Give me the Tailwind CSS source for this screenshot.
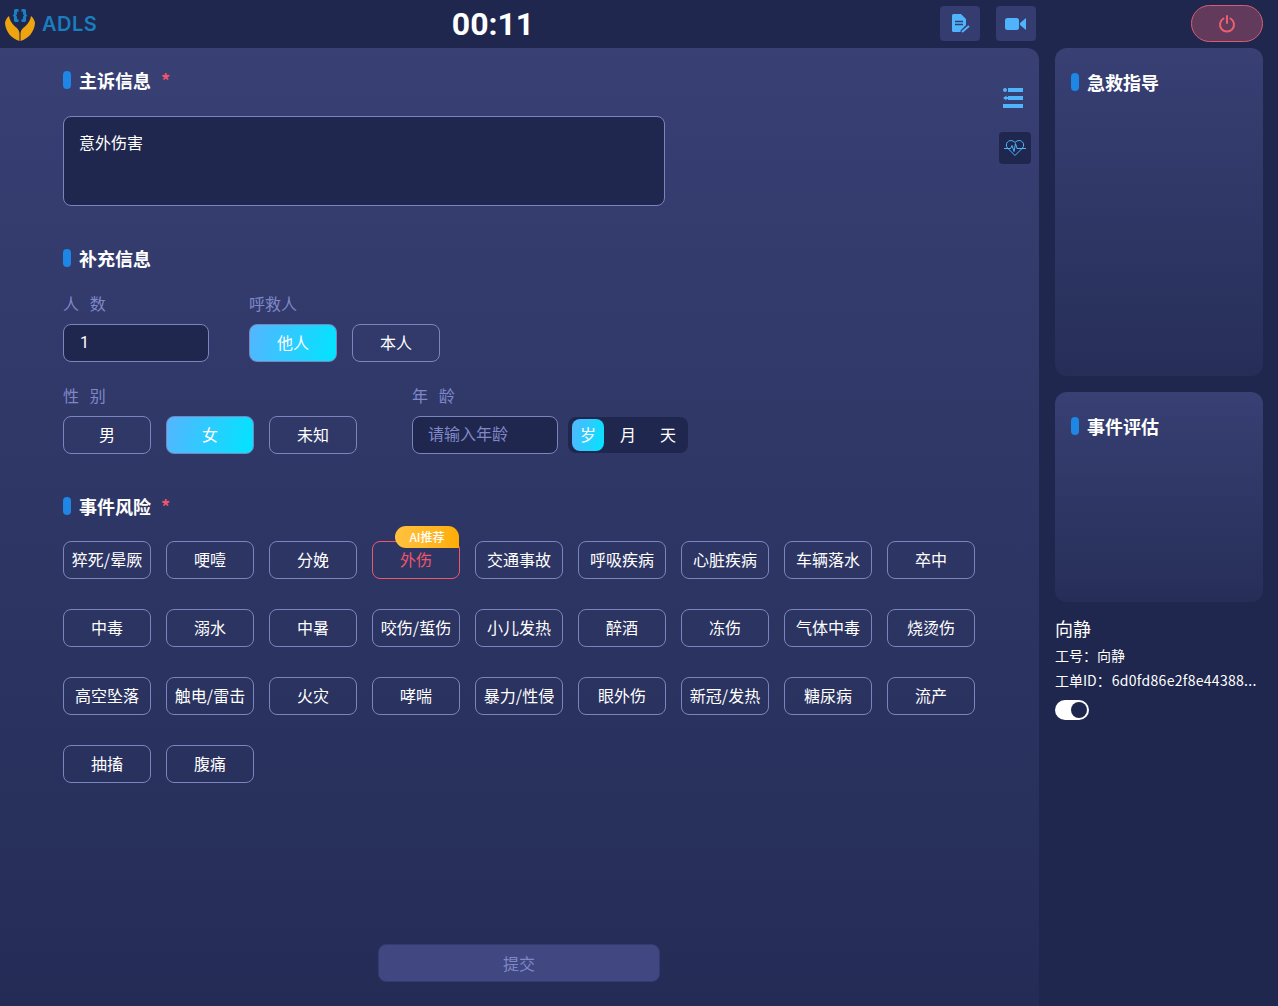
<!DOCTYPE html>
<html lang="zh">
<head>
  <meta charset="UTF-8" />
  <meta name="viewport" content="width=device-width, initial-scale=1" />
  <title>ADLS</title>
  <script src="https://cdn.jsdelivr.net/npm/@tailwindcss/browser@4"></script>
</head>
<body class="w-[1278px] h-[1006px] overflow-hidden bg-[#1f274e] text-white text-base font-['Noto_Sans_CJK_SC','Liberation_Sans',sans-serif]">

  <!-- top bar -->
  <header class="h-12 flex items-start">
    <div class="w-[441px] h-12 flex items-center pl-[5px] gap-[7px]">
      <svg width="30" height="36" viewBox="0 0 30 36" class="mt-[-1px]">
        <path d="M13.500 3h-3a1.500 1.500 0 0 0-1.500 1.500v3.500l-1.200 1.500 1.200 1.500v3.500a1.500 1.500 0 0 0 1.500 1.500h3v-2.800h-1.500v-2.400l-1-1.300 1-1.300v-2.400h1.500z" fill="#1a80c4"/>
        <path d="M16.500 3h3a1.500 1.500 0 0 1 1.500 1.500v3.500l1.200 1.500-1.200 1.500v3.500a1.500 1.500 0 0 1-1.500 1.500h-3v-2.800h1.500v-2.400l1-1.300-1-1.300v-2.400h-1.500z" fill="#1a80c4"/>
        <g fill="#eea40f">
          <path d="M0 17C.500 14 2 11.500 4 10c.500 4 2.500 7 5 9.500 2.500 2.500 5.500 4 5.500 8.500v7C7 33 .500 26 0 17z"/>
          <path d="M30 17c-.500-3-2-5.500-4-7-.500 4-2.500 7-5 9.500-2.500 2.500-5.500 4-5.500 8.500v7C23 33 29.500 26 30 17z"/>
        </g>
      </svg>
      <span class="text-[20px] leading-none font-semibold tracking-[0.5px] text-[#1a7dbd] font-['Inter',sans-serif]">ADLS</span>
    </div>
    <div class="w-[104px] h-12 leading-12 text-center text-[32px] font-bold font-['Roboto',sans-serif]">00:11</div>
    <div class="ml-[395px] mt-[6px] flex gap-4">
      <button class="w-10 h-[35px] rounded bg-[#343c70] flex items-center justify-center">
        <svg width="20" height="20" viewBox="0 0 20 20">
          <path d="M2 1.500A1.500 1.500 0 0 1 3.500 0H11l5 5v6l-5.500 5.500V18H3.500A1.500 1.500 0 0 1 2 16.500z" fill="#4fb4fb"/>
          <path d="M5 7.500h8M5 10.500h8" stroke="#343c70" stroke-width="1.500"/>
          <path d="M12 18l7-6" stroke="#4fb4fb" stroke-width="2"/>
        </svg>
      </button>
      <button class="w-10 h-[35px] rounded bg-[#343c70] flex items-center justify-center">
        <svg width="22" height="14" viewBox="0 0 22 14">
          <rect x="0" y="1" width="14" height="12" rx="2.500" fill="#4fb4fb"/>
          <path d="M15 6l6-5v12l-6-5z" fill="#4fb4fb"/>
        </svg>
      </button>
    </div>
    <button class="ml-[155px] mt-[5px] w-[72px] h-[37px] rounded-full bg-[#623b5c] border border-[#d75d72] flex items-center justify-center">
      <svg width="18" height="18" viewBox="0 0 18 18" fill="none" stroke="#ec5f70" stroke-width="2" stroke-linecap="round">
        <path d="M5.500 3.500a7 7 0 1 0 7 0"/>
        <path d="M9 1v7"/>
      </svg>
    </button>
  </header>

  <div class="flex h-[958px]">
    <!-- main panel -->
    <main class="w-[1039px] rounded-tr-xl bg-gradient-to-b from-[#384074] to-[#242c56] flex">
      <div class="w-[999px] pl-[63px] flex flex-col">
        <div class="h-9 mt-[14px] flex items-center">
          <i class="w-2 h-[18px] rounded-full bg-[#1e86e5]"></i>
          <h2 class="ml-2 text-lg leading-none font-bold">主诉信息</h2>
          <span class="ml-[10px] text-[#f0566b] text-lg leading-none font-bold">*</span>
        </div>
        <div class="mt-[18px] w-[602px] h-[90px] rounded-lg border border-[#7b84bd] bg-[#1f274e] px-[15px] py-[13px] leading-[24px] text-base">意外伤害</div>

        <div class="h-9 mt-[34px] flex items-center">
          <i class="w-2 h-[18px] rounded-full bg-[#1e86e5]"></i>
          <h2 class="ml-2 text-lg leading-none font-bold">补充信息</h2>
        </div>

        <div class="mt-[16px] flex">
          <div class="w-[186px]">
            <div class="h-6 leading-[22px] text-[#7f88c8]">人&nbsp;&nbsp;&nbsp;数</div>
            <div class="mt-2 w-[146px] h-[38px] rounded-lg border border-[#7b84bd] bg-[#1f274e] pl-4 leading-[36px] text-base font-['Roboto',sans-serif]">1</div>
          </div>
          <div>
            <div class="h-6 leading-[22px] text-[#7f88c8]">呼救人</div>
            <div class="mt-2 flex gap-[15px]">
              <button class="w-[88px] h-[38px] pb-[2px] rounded-lg border border-[#7b84bd] bg-linear-[105deg] from-[#55b5ff] to-[#00e5ff]">他人</button>
              <button class="w-[88px] h-[38px] pb-[2px] rounded-lg border border-[#7b84bd]">本人</button>
            </div>
          </div>
        </div>

        <div class="mt-[22px] flex">
          <div class="w-[349px]">
            <div class="h-6 leading-[22px] text-[#7f88c8]">性&nbsp;&nbsp;&nbsp;别</div>
            <div class="mt-2 flex gap-[15px]">
              <button class="w-[88px] h-[38px] pb-[2px] rounded-lg border border-[#7b84bd]">男</button>
              <button class="w-[88px] h-[38px] pb-[2px] rounded-lg border border-[#7b84bd] bg-linear-[105deg] from-[#55b5ff] to-[#00e5ff]">女</button>
              <button class="w-[88px] h-[38px] pb-[2px] rounded-lg border border-[#7b84bd]">未知</button>
            </div>
          </div>
          <div>
            <div class="h-6 leading-[22px] text-[#7f88c8]">年&nbsp;&nbsp;&nbsp;龄</div>
            <div class="mt-2 flex items-center gap-[10px]">
              <div class="w-[146px] h-[38px] rounded-lg border border-[#7b84bd] bg-[#1f274e] pl-[15px] leading-[33px] text-[#7f88c8]">请输入年龄</div>
              <div class="w-[120px] h-9 rounded-lg bg-[#1f274e] flex items-center pl-1">
                <span class="w-8 h-8 rounded-lg bg-linear-[105deg] from-[#55b5ff] to-[#00e5ff] text-center leading-[31px]">岁</span>
                <span class="w-8 ml-[8px] pb-[3px] text-center">月</span>
                <span class="w-8 ml-[8px] pb-[3px] text-center">天</span>
              </div>
            </div>
          </div>
        </div>

        <div class="h-9 mt-[34px] flex items-center">
          <i class="w-2 h-[18px] rounded-full bg-[#1e86e5]"></i>
          <h2 class="ml-2 text-lg leading-none font-bold">事件风险</h2>
          <span class="ml-[10px] text-[#f0566b] text-lg leading-none font-bold">*</span>
        </div>

        <div class="mt-[17px] grid grid-cols-[repeat(9,88px)] gap-x-[15px] gap-y-[30px] text-center [&>button]:pb-[2px]">
          <button class="h-[38px] rounded-lg border border-[#7b84bd]">猝死/晕厥</button>
          <button class="h-[38px] rounded-lg border border-[#7b84bd]">哽噎</button>
          <button class="h-[38px] rounded-lg border border-[#7b84bd]">分娩</button>
          <button class="relative h-[38px] rounded-lg border border-[#f0566b] text-[#f0566b]">外伤
            <span class="absolute right-[0px] top-[-16px] w-[64px] h-[22px] rounded-t-xl rounded-bl-xl bg-gradient-to-r from-[#ffc23d] to-[#ffad00] text-white text-xs leading-[22px] font-medium">AI推荐</span>
          </button>
          <button class="h-[38px] rounded-lg border border-[#7b84bd]">交通事故</button>
          <button class="h-[38px] rounded-lg border border-[#7b84bd]">呼吸疾病</button>
          <button class="h-[38px] rounded-lg border border-[#7b84bd]">心脏疾病</button>
          <button class="h-[38px] rounded-lg border border-[#7b84bd]">车辆落水</button>
          <button class="h-[38px] rounded-lg border border-[#7b84bd]">卒中</button>

          <button class="h-[38px] rounded-lg border border-[#7b84bd]">中毒</button>
          <button class="h-[38px] rounded-lg border border-[#7b84bd]">溺水</button>
          <button class="h-[38px] rounded-lg border border-[#7b84bd]">中暑</button>
          <button class="h-[38px] rounded-lg border border-[#7b84bd]">咬伤/蜇伤</button>
          <button class="h-[38px] rounded-lg border border-[#7b84bd]">小儿发热</button>
          <button class="h-[38px] rounded-lg border border-[#7b84bd]">醉酒</button>
          <button class="h-[38px] rounded-lg border border-[#7b84bd]">冻伤</button>
          <button class="h-[38px] rounded-lg border border-[#7b84bd]">气体中毒</button>
          <button class="h-[38px] rounded-lg border border-[#7b84bd]">烧烫伤</button>

          <button class="h-[38px] rounded-lg border border-[#7b84bd]">高空坠落</button>
          <button class="h-[38px] rounded-lg border border-[#7b84bd]">触电/雷击</button>
          <button class="h-[38px] rounded-lg border border-[#7b84bd]">火灾</button>
          <button class="h-[38px] rounded-lg border border-[#7b84bd]">哮喘</button>
          <button class="h-[38px] rounded-lg border border-[#7b84bd]">暴力/性侵</button>
          <button class="h-[38px] rounded-lg border border-[#7b84bd]">眼外伤</button>
          <button class="h-[38px] rounded-lg border border-[#7b84bd]">新冠/发热</button>
          <button class="h-[38px] rounded-lg border border-[#7b84bd]">糖尿病</button>
          <button class="h-[38px] rounded-lg border border-[#7b84bd]">流产</button>

          <button class="h-[38px] rounded-lg border border-[#7b84bd]">抽搐</button>
          <button class="h-[38px] rounded-lg border border-[#7b84bd]">腹痛</button>
        </div>

        <button class="mt-auto mb-6 ml-[315px] w-[282px] h-[38px] rounded-lg border border-[#343b6e] bg-[#404781] text-[#7f88c8]">提交</button>
      </div>

      <!-- side tools -->
      <div class="flex-1 flex flex-col items-start">
        <svg width="20" height="20" viewBox="0 0 20 20" class="mt-[40px] ml-[4px]" fill="#4fb4fb">
          <circle cx="2" cy="2" r="2"/>
          <rect x="5" y="0" width="15" height="4"/>
          <path d="M0 10l3.500-2.500v1.500H5v2H3.500v1.500z"/>
          <rect x="5" y="8" width="15" height="4"/>
          <rect x="0" y="16" width="20" height="4"/>
        </svg>
        <div class="mt-6 w-8 h-8 rounded bg-[#1f274e] flex items-center justify-center">
          <svg width="22" height="18" viewBox="0 0 22 18" fill="none" stroke="#4fb4fb" stroke-width="1" stroke-linejoin="round">
            <path d="M3.500 9C2 7.500 2 4.500 3.500 3c2-2 5-2 7.500.5C13.500 1 16.500 1 18.500 3c1.500 1.500 1.500 4.500 0 6l-7.500 7.500z"/>
            <path d="M0 9.500h6.500l1.500-3 2 6 1.500-8 1.500 5h9"/>
          </svg>
        </div>
      </div>
    </main>

    <!-- right column -->
    <aside class="ml-4 w-[208px]">
      <section class="h-[328px] rounded-xl bg-gradient-to-b from-[#384074] to-[#262e58] pl-4 pt-4">
        <div class="h-9 flex items-center">
          <i class="w-2 h-[18px] rounded-full bg-[#1e86e5]"></i>
          <h2 class="ml-2 text-lg leading-none font-bold">急救指导</h2>
        </div>
      </section>
      <section class="mt-4 h-[210px] rounded-xl bg-gradient-to-b from-[#384074] to-[#262e58] pl-4 pt-4">
        <div class="h-9 flex items-center">
          <i class="w-2 h-[18px] rounded-full bg-[#1e86e5]"></i>
          <h2 class="ml-2 text-lg leading-none font-bold">事件评估</h2>
        </div>
      </section>
      <div class="mt-[13px] text-lg leading-[27px]">向静</div>
      <div class="mt-[2px] text-sm leading-[22px]">工号：向静</div>
      <div class="mt-[3px] text-sm leading-[22px] whitespace-nowrap">工单ID：<span class="ml-px tracking-[0.3px]">6d0fd86e2f8e44388...</span></div>
      <div class="mt-[9px] w-[34px] h-5 rounded-full bg-white flex items-center justify-end pr-[2px]">
        <span class="w-4 h-4 rounded-full bg-[#1f274e]"></span>
      </div>
    </aside>
  </div>
</body>
</html>
